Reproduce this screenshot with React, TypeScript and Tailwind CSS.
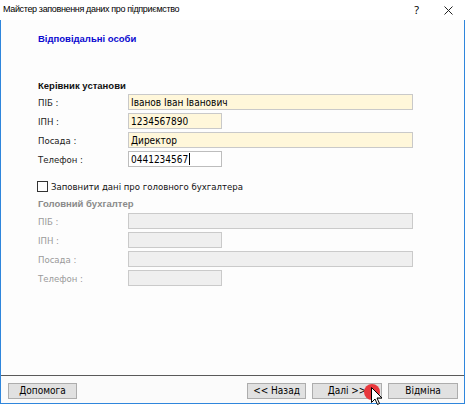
import React from "react";

const F = { fontFamily: '"DejaVu Sans Condensed", "DejaVu Sans", sans-serif' };
const B = { fontFamily: '"Liberation Sans", Arial, sans-serif' };

function Row({ label, value, wide, enabled, caret }: { label: string; value?: string; wide?: boolean; enabled?: boolean; caret?: boolean }) {
  return (
    <div className="flex items-center h-[16px]">
      <div className={`w-[90px] text-[9.5px] leading-[13px] ${enabled ? "text-[#1a1a1a]" : "text-[#9a9a9a]"}`}>{label}</div>
      <div
        className={`h-[16px] ${wide ? "w-[285px]" : "w-[94px]"} border ${
          enabled ? (caret ? "bg-white border-[#bdbdbd]" : "bg-[#fff7da] border-[#c9c9c9]") : "bg-[#efefef] border-[#cacaca]"
        } flex items-center pl-[2px] text-[10px] leading-[13px] text-black`}
      >
        {value}
        {caret && <span className="inline-block w-px h-[12px] bg-black ml-px" />}
      </div>
    </div>
  );
}

export default function App() {
  return (
    <div className="w-[466px] h-[405px] bg-white relative overflow-hidden" style={F}>
      <div className="h-[20px] flex items-center justify-between pl-[3px] pr-[13px]">
        <span className="text-[9px] tracking-[-0.35px] text-black" style={B}>
          Майстер заповнення даних про підприємство
        </span>
        <div className="flex items-center gap-[25px] text-black">
          <span className="text-[11px]" style={{ fontFamily: '"Noto Sans", sans-serif' }}>?</span>
          <svg width="9" height="9" viewBox="0 0 9 9">
            <path d="M0.5 0.5 L8.5 8.5 M8.5 0.5 L0.5 8.5" stroke="#222" strokeWidth="1" />
          </svg>
        </div>
      </div>
      <div className="w-[465px] h-[384px] border-x border-b border-[#2f86dc] flex flex-col">
        <div className="flex-1 bg-[#fdfdfd] pl-[37px]">
          <div className="mt-[12px] text-[9.5px] leading-[13px] font-bold text-[#0a0ad0]" style={B}>Відповідальні особи</div>
          <div className="mt-[34px] text-[9.5px] leading-[13px] font-bold text-[#111]" style={B}>Керівник установи</div>
          <div className="mt-[2px] flex flex-col gap-[3px]">
            <Row label="ПІБ :" value="Іванов Іван Іванович" wide enabled />
            <Row label="ІПН :" value="1234567890" enabled />
            <Row label="Посада :" value="Директор" wide enabled />
            <Row label="Телефон :" value="0441234567" enabled caret />
          </div>
          <div className="mt-[13px] flex items-center gap-[3px] -ml-[1px]">
            <div className="w-[11px] h-[11px] border border-[#333] bg-white" />
            <span className="text-[9.5px] leading-[13px] text-[#111]">Заповнити дані про головного бухгалтера</span>
          </div>
          <div className="mt-[4px] text-[9.5px] leading-[13px] font-bold text-[#8a8a8a]" style={B}>Головний бухгалтер</div>
          <div className="mt-[3px] flex flex-col gap-[3px]">
            <Row label="ПІБ :" wide />
            <Row label="ІПН :" />
            <Row label="Посада :" wide />
            <Row label="Телефон :" />
          </div>
        </div>
        <div className="h-[28px] border-t border-[#5a5a5a] bg-[#fbfbfb] flex items-center pl-[7px] pr-[6px] pt-[2px]">
          <button className="w-[69px] h-[16px] border border-[#adadad] bg-[#e1e1e1] text-[10px] leading-[13px] text-black">Допомога</button>
          <div className="flex-1" />
          <button className="w-[59px] h-[16px] border border-[#adadad] bg-[#e1e1e1] text-[10px] leading-[13px] text-black">&lt;&lt; Назад</button>
          <button className="ml-[6px] w-[70px] h-[16px] border border-[#adadad] bg-[#e1e1e1] text-[10px] leading-[13px] text-black">Далі &gt;&gt;</button>
          <button className="ml-[6px] w-[70px] h-[16px] border border-[#adadad] bg-[#e1e1e1] text-[10px] leading-[13px] text-black">Відміна</button>
        </div>
      </div>
      <div className="absolute left-[364px] top-[384px] w-[16px] h-[16px] rounded-full bg-[#e8383d]" />
      <svg className="absolute left-[371px] top-[387px]" width="12" height="19" viewBox="0 0 12 19">
        <path d="M0.5 0.5 L0.5 15.5 L4 12 L6.5 17.5 L8.5 16.5 L6 11 L11 11 Z" fill="white" stroke="black" strokeWidth="1" strokeLinejoin="round" />
      </svg>
    </div>
  );
}
